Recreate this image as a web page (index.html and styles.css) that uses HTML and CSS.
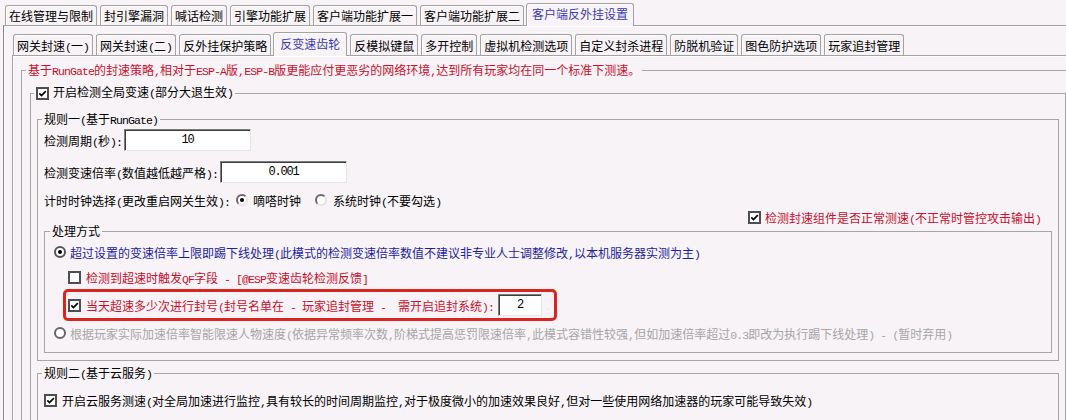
FILE: index.html
```html
<!DOCTYPE html>
<html lang="zh-CN">
<head>
<meta charset="utf-8">
<title>客户端反外挂设置</title>
<link rel="stylesheet" href="styles.css">
</head>
<body>
<div class="app">
  <div class="tabstrip top">
    <div class="tab">在线管理与限制</div>
    <div class="tab">封引擎漏洞</div>
    <div class="tab">喊话检测</div>
    <div class="tab">引擎功能扩展</div>
    <div class="tab">客户端功能扩展一</div>
    <div class="tab">客户端功能扩展二</div>
    <div class="tab sel">客户端反外挂设置</div>
  </div>
  <div class="panel outer">
    <div class="tabstrip sub">
      <div class="tab">网关封速<span class="a">(</span>一<span class="a">)</span></div>
      <div class="tab">网关封速<span class="a">(</span>二<span class="a">)</span></div>
      <div class="tab">反外挂保护策略</div>
      <div class="tab sel">反变速齿轮</div>
      <div class="tab">反模拟键鼠</div>
      <div class="tab">多开控制</div>
      <div class="tab">虚拟机检测选项</div>
      <div class="tab">自定义封杀进程</div>
      <div class="tab">防脱机验证</div>
      <div class="tab">图色防护选项</div>
      <div class="tab">玩家追封管理</div>
    </div>
    <div class="panel inner">
      <fieldset class="grp g1">
        <legend class="red">基于<span class="a">RunGate</span>的封速策略<span class="a">,</span>相对于<span class="a">ESP-A</span>版<span class="a">,</span><span class="a">ESP-B</span>版更能应付更恶劣的网络环境<span class="a">,</span>达到所有玩家均在同一个标准下测速。</legend>
        <div class="g1-body">
          <fieldset class="grp g2">
            <legend class="lg-check"><span class="cb on"><svg viewBox="0 0 9 9"><path d="M1.3 4.4 L3.5 6.6 L7.8 2.2"/></svg></span><span class="lbl">开启检测全局变速<span class="a">(</span>部分大退生效<span class="a">)</span></span></legend>
            <div class="g2-body">
              <fieldset class="grp rule">
                <legend>规则一<span class="a">(</span>基于<span class="a">RunGate)</span></legend>
                <div class="rule-body">
                  <div class="row r-input">
                    <span>检测周期<span class="a">(</span>秒<span class="a">):</span></span>
                    <div class="inp w126"><span class="a">10</span></div>
                  </div>
                  <div class="row r-input gap10">
                    <span>检测变速倍率<span class="a">(</span>数值越低越严格<span class="a">):</span></span>
                    <div class="inp w126"><span class="a">0.001</span></div>
                  </div>
                  <div class="row r-clock">
                    <span>计时时钟选择<span class="a">(</span>更改重启网关生效<span class="a">):</span></span>
                    <span class="radio classic on first"></span><span class="opt">嘀嗒时钟</span>
                    <span class="radio classic second"></span><span class="opt opt2">系统时钟<span class="a">(</span>不要勾选<span class="a">)</span></span>
                  </div>
                  <div class="row r-right red">
                    <span class="cb on"><svg viewBox="0 0 9 9"><path d="M1.3 4.4 L3.5 6.6 L7.8 2.2"/></svg></span><span class="lbl">检测封速组件是否正常测速<span class="a">(</span>不正常时管控攻击输出<span class="a">)</span></span>
                  </div>
                  <fieldset class="grp proc">
                    <legend>处理方式</legend>
                    <div class="proc-body">
                      <div class="row r-line blue">
                        <span class="radio full on"></span><span class="opt">超过设置的变速倍率上限即踢下线处理<span class="a">(</span>此模式的检测变速倍率数值不建议非专业人士调整修改<span class="a">,</span>以本机服务器实测为主<span class="a">)</span></span>
                      </div>
                      <div class="row r-line r-sub red gap9">
                        <span class="cb"></span><span class="lbl5">检测到超速时触发<span class="a">QF</span>字段<span class="a"> - [@ESP</span>变速齿轮检测反馈<span class="a">]</span></span>
                      </div>
                      <div class="row highlight red">
                        <span class="cb on"><svg viewBox="0 0 9 9"><path d="M1.3 4.4 L3.5 6.6 L7.8 2.2"/></svg></span><span class="lbl5">当天超速多少次进行封号<span class="a">(</span>封号名单在<span class="a"> - </span>玩家追封管理<span class="a"> -  </span>需开启追封系统<span class="a">):</span></span>
                        <div class="inp w44"><span class="a">2</span></div>
                      </div>
                      <div class="row r-line gray gap4">
                        <span class="radio full dim"></span><span class="opt">根据玩家实际加速倍率智能限速人物速度<span class="a">(</span>依据异常频率次数<span class="a">,</span>阶梯式提高惩罚限速倍率<span class="a">,</span>此模式容错性较强<span class="a">,</span>但如加速倍率超过<span class="a">0.3</span>即改为执行踢下线处理<span class="a">) - (</span>暂时弃用<span class="a">)</span></span>
                      </div>
                    </div>
                  </fieldset>
                </div>
              </fieldset>
              <fieldset class="grp rule rule2">
                <legend>规则二<span class="a">(</span>基于云服务<span class="a">)</span></legend>
                <div class="rule2-body">
                  <div class="row r-line">
                    <span class="cb on"><svg viewBox="0 0 9 9"><path d="M1.3 4.4 L3.5 6.6 L7.8 2.2"/></svg></span><span class="lbl5">开启云服务测速<span class="a">(</span>对全局加速进行监控<span class="a">,</span>具有较长的时间周期监控<span class="a">,</span>对于极度微小的加速效果良好<span class="a">,</span>但对一些使用网络加速器的玩家可能导致失效<span class="a">)</span></span>
                  </div>
                </div>
              </fieldset>
            </div>
          </fieldset>
        </div>
      </fieldset>
    </div>
  </div>
</div>
</body>
</html>
```
FILE: styles.css
```css
html, body {
  margin: 0;
  padding: 0;
  overflow: hidden;
  background: #f7f3f6;
}
body {
  font-family: "Noto Sans CJK SC", sans-serif;
  font-size: 12px;
  color: #000;
  height: 420px;
}
.app {
  width: 1090px;
  padding-left: 3px;
}
.a {
  font-family: "Liberation Mono", monospace;
  font-size: 11.5px;
  letter-spacing: -0.9px;
  white-space: pre;
}
.red { color: #c8102e; }
.blue { color: #1e1ea0; }
.gray { color: #a6a6a6; }

/* tabs */
.tabstrip {
  display: flex;
  align-items: flex-end;
  position: relative;
  z-index: 1;
}
.tabstrip.top {
  height: 25px;
  padding-left: 2px;
}
.tabstrip.sub {
  height: 29px;
  padding-left: 1px;
}
.tab {
  height: 19px;
  line-height: 19px;
  padding: 0 3px;
  margin-right: 3px;
  border: 1px solid #a3a3a3;
  border-bottom: 0;
  border-radius: 3px 3px 0 0;
  box-shadow: inset 1px 1px 0 #fff;
  white-space: nowrap;
  background: #f7f3f6;
}
.tabstrip.sub .tab {
  height: 20px;
  line-height: 21px;
}
.tab.sel {
  height: 22px;
  line-height: 20px;
  margin-bottom: -1px;
  margin-left: -1px;
  padding: 0 5px;
  color: #3a3ab4;
}
.tabstrip.sub .tab.sel {
  height: 23px;
  line-height: 21px;
  padding: 0 6px;
}

/* panels */
.panel {
  border: 1px solid #a3a3a3;
  box-shadow: inset 1px 1px 0 #fff;
}
.outer {
  padding: 0 8px;
  height: 500px;
  border-left-color: #8a8a8a;
}
.inner {
  padding: 0 8px;
  height: 470px;
}

/* group boxes */
fieldset.grp {
  margin: 0;
  padding: 0;
  border: 1px solid #a6a6a6;
  min-width: 0;
}
fieldset.grp > legend {
  padding: 0 2px;
  margin-left: 4px;
  height: 16px;
  line-height: 16px;
  white-space: nowrap;
}
fieldset.g1 { margin-top: 6px; }
.g1-body { padding: 7px 8px 0 8px; }
fieldset.g2 > legend.lg-check {
  margin-left: 3px;
  display: flex;
  align-items: center;
}
.g2-body { padding: 10px 6px 30px 6px; }
.rule-body { padding: 2px 6px 7px 6px; }
fieldset.proc > legend { margin-left: 5px; }
.proc-body { padding: 5px 6px 11px 9px; }
fieldset.rule2 { margin-top: 4px; }
.rule2-body { padding: 11px 6px 30px 6px; }

/* rows */
.row {
  display: flex;
  align-items: center;
  white-space: nowrap;
}
.r-input { height: 22px; }
.r-input .inp { margin-left: 2px; }
.gap10 { margin-top: 10px; }
.gap9 { margin-top: 9px; }
.gap4 { margin-top: 4px; }
.r-clock {
  height: 16px;
  margin-top: 9px;
}
.r-clock .first { margin-left: 6px; }
.r-clock .second { margin-left: 14px; }
.r-clock .opt { margin-left: 5px; }
.r-clock .opt2 { margin-left: 6px; }
.r-right {
  height: 15px;
  padding-top: 2px;
  box-sizing: border-box;
  height: 16px;
  margin-bottom: -1px;
  justify-content: flex-end;
  padding-right: 11px;
}
.lbl { margin-left: 4px; }
.lbl5 { margin-left: 5px; }
.r-line { height: 16px; }
.r-line .opt { margin-left: 4px; }
.r-sub { padding-left: 14px; }
.highlight {
  box-sizing: border-box;
  margin-top: 4px;
  margin-left: 9px;
  width: 494px;
  height: 32px;
  border: 3px solid #d7261e;
  border-radius: 5px;
  padding-left: 2px;
}
.highlight .inp { margin-left: 4px; }

/* controls */
.inp {
  box-sizing: border-box;
  height: 22px;
  background: #fff;
  border: 1px solid;
  border-color: #7d7d7d #e6e6e6 #e6e6e6 #7d7d7d;
  box-shadow: inset 1px 1px 0 #3f3f3f;
  display: flex;
  align-items: center;
  justify-content: center;
  color: #000;
}
.inp .a { font-size: 12px; letter-spacing: -1.2px; }
.w126 { width: 127px; }
.w44 { width: 44px; height: 22px; }

.cb {
  box-sizing: border-box;
  width: 13px;
  height: 13px;
  flex: none;
  background: #fff;
  border: 2px solid #4e4e4e;
  display: flex;
  align-items: center;
  justify-content: center;
}
.cb svg {
  width: 9px;
  height: 9px;
  display: block;
}
.cb svg path {
  fill: none;
  stroke: #000;
  stroke-width: 1.7;
}

.radio {
  box-sizing: border-box;
  width: 12px;
  height: 12px;
  flex: none;
  border-radius: 50%;
  background: #fff;
  position: relative;
}
.radio.classic {
  border: 2px solid;
  border-color: #6a6a6a #e4e4e4 #e4e4e4 #6a6a6a;
}
.radio.full {
  border: 2px solid #555;
}
.radio.dim {
  border-color: #666;
}
.radio.on::after {
  content: "";
  position: absolute;
  left: 2px;
  top: 2px;
  width: 4px;
  height: 4px;
  border-radius: 50%;
  background: #000;
}
```
